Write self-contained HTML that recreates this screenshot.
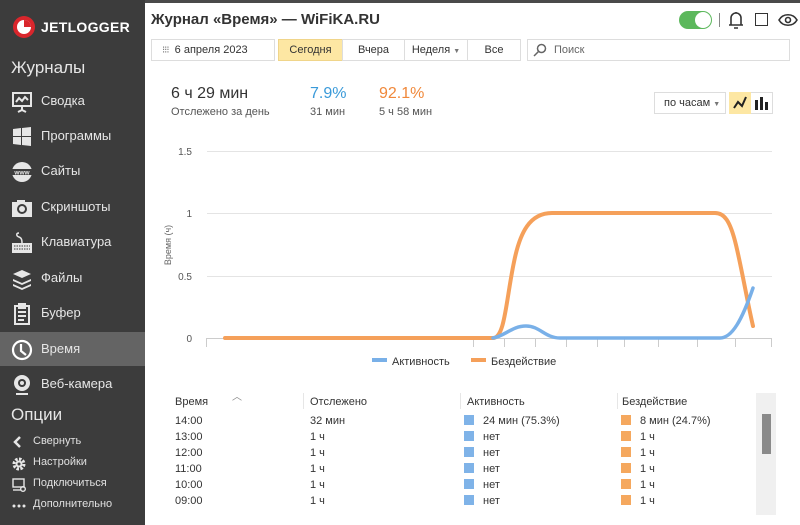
<!DOCTYPE html>
<html><head><meta charset="utf-8"><style>
*{box-sizing:border-box;margin:0;padding:0}
body{width:800px;height:525px;overflow:hidden;background:#fff;font-family:"Liberation Sans","DejaVu Sans",sans-serif;position:relative;color:#333}
.sb{position:absolute;left:0;top:0;width:145px;height:525px;background:#3c3c3c;color:#e0e0e0}
.topbar{position:absolute;left:145px;top:0;width:655px;height:3px;background:#4a4a4a}
.ab{position:absolute}
.it{position:absolute;left:0;width:145px;height:34px;font-size:13px;color:#e6e6e6;line-height:34px;padding-left:41px}
.it svg{position:absolute;left:11px;top:7px}
.sel{background:#646464}
.op{position:absolute;left:0;font-size:11px;color:#e0e0e0;padding-left:33px}
.op svg{position:absolute;left:12px;top:1px}
.btn{position:absolute;top:39px;height:22px;border:1px solid #ddd;font-size:11px;line-height:20px;text-align:center;color:#333;background:#fff}
.th{position:absolute;top:396px;font-size:11px;color:#333}
.row{position:absolute;font-size:11px;color:#333}
.sq{display:inline-block;width:10px;height:10px;vertical-align:-1px;margin-right:9px}
</style></head><body>
<div class="sb">
  <svg class="ab" style="left:12px;top:15px" width="24" height="24" viewBox="0 0 24 24"><circle cx="12" cy="12" r="11" fill="#d9262c"/><circle cx="12" cy="12" r="7" fill="#fff"/><path d="M12 12V5A7 7 0 0 1 19 12Z" fill="#d9262c"/></svg>
  <div class="ab" style="left:41px;top:19px;font-size:14px;font-weight:bold;color:#fff;letter-spacing:.3px">JETLOGGER</div>
  <div class="ab" style="left:11px;top:58px;font-size:17px;color:#e6e6e6">Журналы</div>
  <div class="it" style="top:84px"><svg width="22" height="22" viewBox="0 0 22 22" fill="none" stroke="#e6e6e6" stroke-width="2"><rect x="2" y="2" width="18" height="13"/><path d="M5 11l3-4 3 3 3-4 3 3M11 15v4M7 21l4-2 4 2"/></svg>Сводка</div>
  <div class="it" style="top:119px"><svg width="22" height="22" viewBox="0 0 22 22" fill="#e6e6e6"><path d="M2 3l8-1v8H2zM11 2l9-1v9h-9zM2 11h8v8l-8-1zM11 11h9v9l-9-1z"/></svg>Программы</div>
  <div class="it" style="top:154px"><svg width="22" height="22" viewBox="0 0 22 22"><circle cx="11" cy="11" r="10" fill="#e6e6e6"/><rect x="0" y="8" width="22" height="6" fill="#3c3c3c"/><text x="11" y="13.5" font-size="6.5" fill="#e6e6e6" text-anchor="middle" font-family="Liberation Sans" font-weight="bold">www</text></svg>Сайты</div>
  <div class="it" style="top:190px"><svg width="22" height="22" viewBox="0 0 22 22"><rect x="1" y="5" width="20" height="15" fill="#e6e6e6"/><rect x="6" y="3" width="8" height="4" fill="#e6e6e6"/><circle cx="11" cy="12" r="5" fill="#3c3c3c"/><circle cx="11" cy="12" r="3" fill="#e6e6e6"/></svg>Скриншоты</div>
  <div class="it" style="top:225px"><svg width="22" height="22" viewBox="0 0 22 22"><path d="M8 1c-3 0-3 3 0 4s3 4 3 6" stroke="#e6e6e6" fill="none" stroke-width="1.5"/><rect x="1" y="11" width="20" height="10" fill="#e6e6e6"/><path d="M3 14h16M3 17h16" stroke="#3c3c3c" stroke-width="1" stroke-dasharray="1.5 1"/></svg>Клавиатура</div>
  <div class="it" style="top:261px"><svg width="22" height="22" viewBox="0 0 22 22" fill="#e6e6e6"><path d="M2 6l9-4 9 4-9 4z"/><path d="M2 11l9 4 9-4v2l-9 4-9-4z"/><path d="M2 16l9 4 9-4v2l-9 4-9-4z"/></svg>Файлы</div>
  <div class="it" style="top:296px"><svg width="22" height="22" viewBox="0 0 22 22" fill="none" stroke="#e6e6e6" stroke-width="2"><rect x="4" y="3" width="14" height="18"/><path d="M8 1h6v4H8zM7 9h8M7 13h8M7 17h6"/></svg>Буфер</div>
  <div class="it sel" style="top:332px"><svg width="22" height="22" viewBox="0 0 22 22" fill="none" stroke="#fff" stroke-width="2.2"><circle cx="11" cy="11" r="9"/><path d="M10 5v7l5 4"/></svg>Время</div>
  <div class="it" style="top:367px"><svg width="22" height="22" viewBox="0 0 22 22"><circle cx="11" cy="9" r="8" fill="#e6e6e6"/><circle cx="11" cy="9" r="4" fill="#3c3c3c"/><circle cx="11" cy="9" r="2" fill="#e6e6e6"/><path d="M5 19h12v2H5z" fill="#e6e6e6"/></svg>Веб-камера</div>
  <div class="ab" style="left:11px;top:405px;font-size:17px;color:#e6e6e6">Опции</div>
  <div class="op" style="top:435px"><svg width="12" height="12" viewBox="0 0 12 12"><path d="M8 1L3 6l5 5" stroke="#e6e6e6" stroke-width="2.5" fill="none"/></svg>Свернуть</div>
  <div class="op" style="top:456px"><svg width="14" height="14" viewBox="0 0 14 14"><circle cx="7" cy="7" r="5" fill="none" stroke="#e6e6e6" stroke-width="3" stroke-dasharray="2.5 1.4"/><circle cx="7" cy="7" r="3.5" fill="#e6e6e6"/><circle cx="7" cy="7" r="1.5" fill="#3c3c3c"/></svg>Настройки</div>
  <div class="op" style="top:477px"><svg width="14" height="14" viewBox="0 0 14 14" fill="none" stroke="#e6e6e6" stroke-width="1.4"><rect x="1" y="1" width="11" height="8"/><path d="M1 12h8"/><circle cx="11" cy="11" r="2.3"/></svg>Подключиться</div>
  <div class="op" style="top:498px"><svg width="14" height="14" viewBox="0 0 14 14" fill="#e6e6e6"><circle cx="2" cy="7" r="1.5"/><circle cx="7" cy="7" r="1.5"/><circle cx="12" cy="7" r="1.5"/></svg>Дополнительно</div>
</div>
<div class="topbar"></div>

<div class="ab" style="left:151px;top:11px;font-size:15px;font-weight:bold;color:#333">Журнал «Время» — WiFiKA.RU</div>
<div class="ab" style="left:679px;top:11px;width:33px;height:18px;border-radius:9px;background:#5cb85c"></div>
<div class="ab" style="left:695px;top:12px;width:16px;height:16px;border-radius:8px;background:#fff"></div>
<div class="ab" style="left:719px;top:13px;width:1px;height:14px;background:#888"></div>
<svg class="ab" style="left:727px;top:10px" width="18" height="20" viewBox="0 0 18 20" fill="none" stroke="#333" stroke-width="1.6"><path d="M4 15V8a5 5 0 0 1 10 0v7M2 15h14M9 2v1M7 18h4"/></svg>
<div class="ab" style="left:755px;top:13px;width:13px;height:13px;border:1.6px solid #333"></div>
<svg class="ab" style="left:778px;top:10px" width="20" height="20" viewBox="0 0 20 20" fill="none" stroke="#333" stroke-width="1.6"><path d="M1 10c4-7 14-7 18 0-4 7-14 7-18 0z"/><circle cx="10" cy="10" r="2.5"/></svg>

<div class="btn" style="left:151px;width:124px;text-align:left;padding-left:10px"><span style="color:#777;font-size:10px;letter-spacing:-1px">⁝⁝⁝</span>&nbsp; 6 апреля 2023</div>
<div class="btn" style="left:278px;width:65px;background:#fde7a3;border-color:#f0d58a">Сегодня</div>
<div class="btn" style="left:342px;width:63px">Вчера</div>
<div class="btn" style="left:404px;width:64px">Неделя <span style="font-size:7px;color:#777">▼</span></div>
<div class="btn" style="left:467px;width:54px">Все</div>
<div class="btn" style="left:527px;width:263px;text-align:left;padding-left:26px;color:#666">Поиск</div>
<svg class="ab" style="left:533px;top:43px" width="14" height="14" viewBox="0 0 14 14" fill="none" stroke="#666" stroke-width="1.5"><circle cx="8.5" cy="5.5" r="4"/><path d="M5.5 8.5L1 13"/></svg>

<div class="ab" style="left:171px;top:85px;font-size:16px;color:#333">6 ч 29 мин</div>
<div class="ab" style="left:171px;top:106px;font-size:11px;color:#555">Отслежено за день</div>
<div class="ab" style="left:310px;top:85px;font-size:16px;color:#3a9ad9">7.9%</div>
<div class="ab" style="left:310px;top:106px;font-size:11px;color:#555">31 мин</div>
<div class="ab" style="left:379px;top:85px;font-size:16px;color:#f0883a">92.1%</div>
<div class="ab" style="left:379px;top:106px;font-size:11px;color:#555">5 ч 58 мин</div>
<div class="ab" style="left:654px;top:92px;width:72px;height:22px;border:1px solid #ddd;font-size:11px;line-height:20px;padding-left:9px">по часам <span style="font-size:7px;color:#777">▼</span></div>
<div class="ab" style="left:729px;top:92px;width:44px;height:22px;border:1px solid #ddd"></div>
<div class="ab" style="left:729px;top:92px;width:22px;height:22px;background:#fde7a3"></div>
<svg class="ab" style="left:733px;top:96px" width="14" height="14" viewBox="0 0 14 14" fill="none" stroke="#222" stroke-width="2"><path d="M1 12l4-6 4 4 4-9"/></svg>
<svg class="ab" style="left:754px;top:96px" width="14" height="14" viewBox="0 0 14 14" fill="#222"><rect x="1" y="4" width="3" height="10"/><rect x="6" y="1" width="3" height="13"/><rect x="11" y="6" width="3" height="8"/></svg>

<svg class="ab" style="left:150px;top:130px" width="640" height="250" viewBox="150 130 640 250">
<g stroke="#e4e4e4" stroke-width="1"><line x1="207" y1="151.5" x2="772" y2="151.5"/><line x1="207" y1="213.5" x2="772" y2="213.5"/><line x1="207" y1="276.5" x2="772" y2="276.5"/></g>
<line x1="206" y1="338.5" x2="772" y2="338.5" stroke="#ccc"/>
<g stroke="#ccc"><line x1="206.5" y1="338" x2="206.5" y2="347"/><line x1="473.5" y1="338" x2="473.5" y2="347"/><line x1="504.5" y1="338" x2="504.5" y2="347"/><line x1="535.5" y1="338" x2="535.5" y2="347"/><line x1="566.5" y1="338" x2="566.5" y2="347"/><line x1="597.5" y1="338" x2="597.5" y2="347"/><line x1="624.5" y1="338" x2="624.5" y2="347"/><line x1="658.5" y1="338" x2="658.5" y2="347"/><line x1="697.5" y1="338" x2="697.5" y2="347"/><line x1="735.5" y1="338" x2="735.5" y2="347"/><line x1="771.5" y1="338" x2="771.5" y2="347"/></g>
<g font-family="Liberation Sans" font-size="10" fill="#555" text-anchor="end"><text x="192" y="155">1.5</text><text x="192" y="217">1</text><text x="192" y="280">0.5</text><text x="192" y="342">0</text></g>
<text transform="translate(171,245) rotate(-90)" font-family="Liberation Sans" font-size="9" fill="#666" text-anchor="middle">Время (ч)</text>
<path d="M225 338H493C505 338 506 300 514 262C520 232 530 213 552 213H715C724 213 730 220 736 245C742 270 748 305 753 326" fill="none" stroke="#f5a05a" stroke-width="4" stroke-linecap="round"/>
<path d="M493 338C505 336 512 326 526 326C540 326 545 338 560 338H720C732 338 742 320 753 288" fill="none" stroke="#79b0e8" stroke-width="3.5" stroke-linecap="round"/>
<rect x="372" y="358" width="15" height="4" fill="#79b0e8"/><text x="392" y="365" font-family="Liberation Sans" font-size="11" fill="#333">Активность</text>
<rect x="471" y="358" width="15" height="4" fill="#f5a05a"/><text x="491" y="365" font-family="Liberation Sans" font-size="11" fill="#333">Бездействие</text>
</svg>

<div class="ab" style="left:232px;top:388px;font-size:10px;color:#888">︿</div>
<div class="th" style="left:175px">Время</div>
<div class="ab" style="left:303px;top:393px;width:1px;height:16px;background:#e6e6e6"></div>
<div class="th" style="left:310px">Отслежено</div>
<div class="ab" style="left:460px;top:393px;width:1px;height:16px;background:#e6e6e6"></div>
<div class="th" style="left:467px">Активность</div>
<div class="ab" style="left:617px;top:393px;width:1px;height:16px;background:#e6e6e6"></div>
<div class="th" style="left:622px">Бездействие</div>
<div class="ab" style="left:756px;top:393px;width:20px;height:122px;background:#f0f0f0"></div>
<div class="ab" style="left:762px;top:414px;width:9px;height:40px;background:#8a8a8a"></div>

<div class="row" style="left:175px;top:415px">14:00</div><div class="row" style="left:310px;top:415px">32 мин</div><div class="row" style="left:464px;top:415px"><span class="sq" style="background:#7fb3e8"></span>24 мин (75.3%)</div><div class="row" style="left:621px;top:415px"><span class="sq" style="background:#f5a85e"></span>8 мин (24.7%)</div>
<div class="row" style="left:175px;top:431px">13:00</div><div class="row" style="left:310px;top:431px">1 ч</div><div class="row" style="left:464px;top:431px"><span class="sq" style="background:#7fb3e8"></span>нет</div><div class="row" style="left:621px;top:431px"><span class="sq" style="background:#f5a85e"></span>1 ч</div>
<div class="row" style="left:175px;top:447px">12:00</div><div class="row" style="left:310px;top:447px">1 ч</div><div class="row" style="left:464px;top:447px"><span class="sq" style="background:#7fb3e8"></span>нет</div><div class="row" style="left:621px;top:447px"><span class="sq" style="background:#f5a85e"></span>1 ч</div>
<div class="row" style="left:175px;top:463px">11:00</div><div class="row" style="left:310px;top:463px">1 ч</div><div class="row" style="left:464px;top:463px"><span class="sq" style="background:#7fb3e8"></span>нет</div><div class="row" style="left:621px;top:463px"><span class="sq" style="background:#f5a85e"></span>1 ч</div>
<div class="row" style="left:175px;top:479px">10:00</div><div class="row" style="left:310px;top:479px">1 ч</div><div class="row" style="left:464px;top:479px"><span class="sq" style="background:#7fb3e8"></span>нет</div><div class="row" style="left:621px;top:479px"><span class="sq" style="background:#f5a85e"></span>1 ч</div>
<div class="row" style="left:175px;top:495px">09:00</div><div class="row" style="left:310px;top:495px">1 ч</div><div class="row" style="left:464px;top:495px"><span class="sq" style="background:#7fb3e8"></span>нет</div><div class="row" style="left:621px;top:495px"><span class="sq" style="background:#f5a85e"></span>1 ч</div>
</body></html>
